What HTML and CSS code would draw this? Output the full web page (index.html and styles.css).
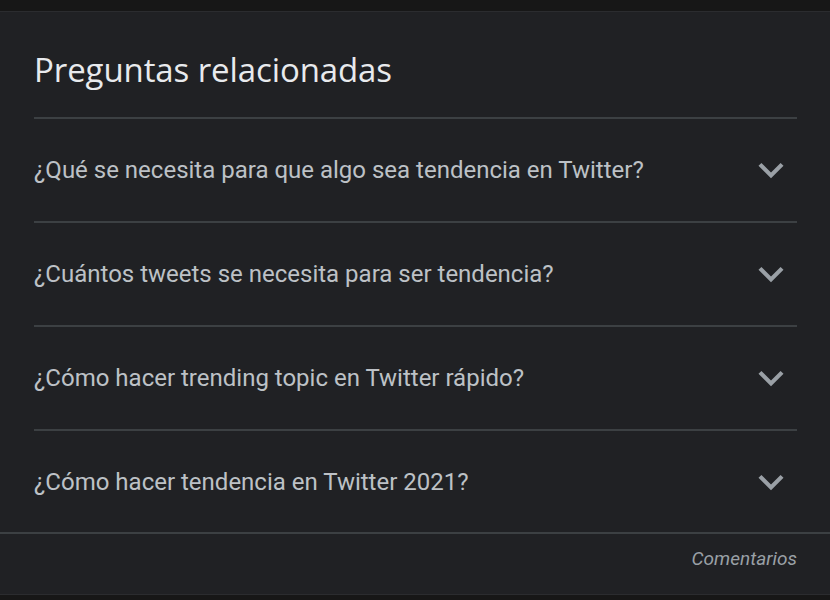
FILE: index.html
```html
<!DOCTYPE html>
<html lang="es">
<head>
    <meta charset="UTF-8">
    <meta name="viewport" content="width=device-width, initial-scale=1.0">
    <title>Preguntas relacionadas</title>
    <link rel="stylesheet" href="styles.css">
</head>
<body>
    <div class="card">
        <div class="related">
            <h2>Preguntas relacionadas</h2>

            <div class="question">
                <span>¿Qué se necesita para que algo sea tendencia en Twitter?</span>
                <svg class="chevron" viewBox="0 0 24 24"><path d="M16.59 8.59L12 13.17 7.41 8.59 6 10l6 6 6-6z"/></svg>
            </div>
            <div class="question">
                <span>¿Cuántos tweets se necesita para ser tendencia?</span>
                <svg class="chevron" viewBox="0 0 24 24"><path d="M16.59 8.59L12 13.17 7.41 8.59 6 10l6 6 6-6z"/></svg>
            </div>
            <div class="question">
                <span>¿Cómo hacer trending topic en Twitter rápido?</span>
                <svg class="chevron" viewBox="0 0 24 24"><path d="M16.59 8.59L12 13.17 7.41 8.59 6 10l6 6 6-6z"/></svg>
            </div>
            <div class="question">
                <span>¿Cómo hacer tendencia en Twitter 2021?</span>
                <svg class="chevron" viewBox="0 0 24 24"><path d="M16.59 8.59L12 13.17 7.41 8.59 6 10l6 6 6-6z"/></svg>
            </div>
        </div>

        <div class="feedback">
            <span>Comentarios</span>
        </div>
    </div>
</body>
</html>
```

FILE: styles.css
```css
* {
    margin: 0;
    padding: 0;
    box-sizing: border-box;
}

body {
    background: #171717;
    font-family: Roboto, Arial, sans-serif;
    height: 600px;
    overflow: hidden;
}

.card {
    margin-top: 11px;
    background: #202124;
    border-top: 1px solid #2b2c2f;
    border-bottom: 1px solid #2b2c2f;
}

.related {
    padding: 0 33px 0 34px;
}

h2 {
    font-family: "Open Sans", Roboto, sans-serif;
    font-weight: 400;
    font-size: 33px;
    line-height: 40px;
    color: #e8eaed;
    padding: 38px 0 27px;
    border-bottom: 2px solid #3c4043;
    letter-spacing: -0.1px;
}

.question {
    display: flex;
    align-items: center;
    justify-content: space-between;
    height: 104px;
    border-bottom: 2px solid #3c4043;
    font-size: 24px;
    color: #bdc1c6;
}

.question:last-child {
    height: 101px;
    border-bottom: none;
}

.chevron {
    width: 50px;
    height: 50px;
    margin-right: 1px;
    fill: #9aa0a6;
}

.feedback {
    display: flex;
    justify-content: flex-end;
    align-items: flex-start;
    height: 62px;
    padding: 14px 33px 0 0;
    border-top: 2px solid #3c4043;
    font-size: 19px;
    line-height: 22px;
    font-style: italic;
    color: #9aa0a6;
}
```
